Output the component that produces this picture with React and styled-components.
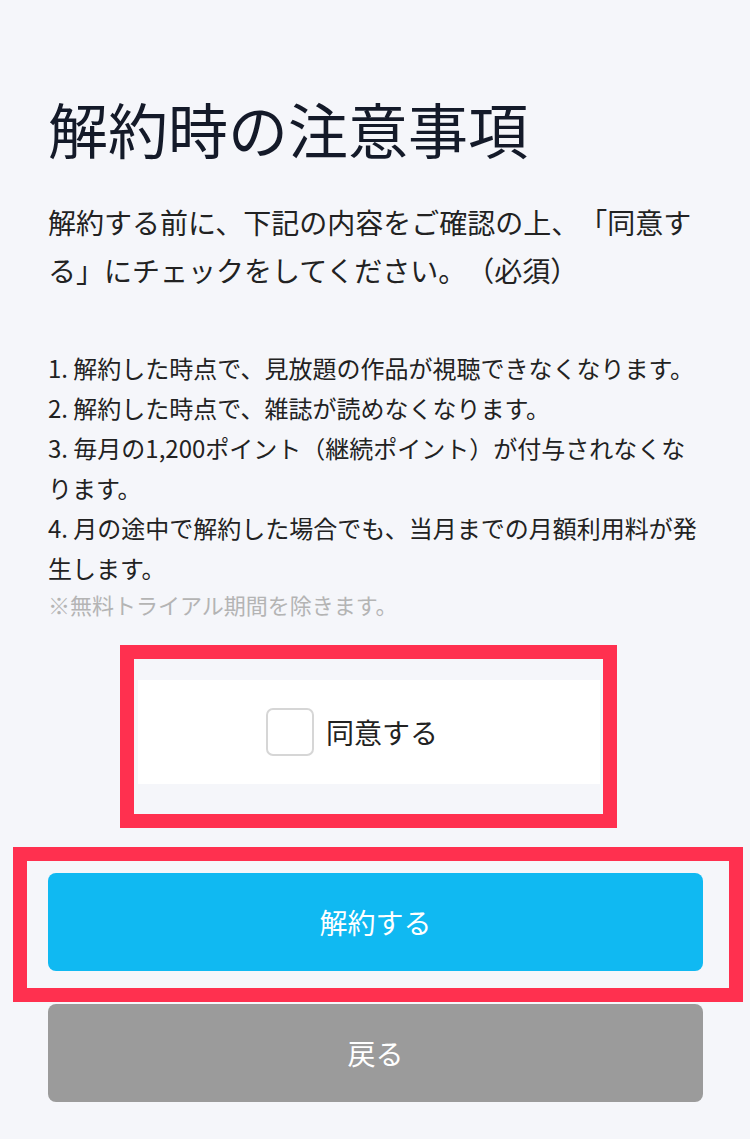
import React, { useState } from "react";
import styled, { createGlobalStyle } from "styled-components";

const GlobalStyle = createGlobalStyle`
  html, body {
    margin: 0;
    padding: 0;
    background: #f5f6fa;
  }
  body {
    font-family: "Noto Sans CJK JP", "Noto Sans", sans-serif;
    color: #222222;
    text-spacing-trim: space-all;
  }
`;

const notices = [
  "1. 解約した時点で、見放題の作品が視聴できなくなります。",
  "2. 解約した時点で、雑誌が読めなくなります。",
  "3. 毎月の1,200ポイント（継続ポイント）が付与されなくなります。",
  "4. 月の途中で解約した場合でも、当月までの月額利用料が発生します。",
];

export default function App() {
  const [agreed, setAgreed] = useState(false);

  return (
    <Page>
      <GlobalStyle />
      <Title>解約時の注意事項</Title>
      <Intro>解約する前に、下記の内容をご確認の上、「同意する」にチェックをしてください。（必須）</Intro>
      <NoticeList>
        {notices.map((n) => (
          <li key={n}>{n}</li>
        ))}
      </NoticeList>
      <Note>※無料トライアル期間を除きます。</Note>

      <AgreeFrame>
        <AgreePanel>
          <AgreeLabel onClick={() => setAgreed(!agreed)}>
            <CheckBox $checked={agreed} />
            <span>同意する</span>
          </AgreeLabel>
        </AgreePanel>
      </AgreeFrame>

      <ButtonFrame>
        <Button $variant="primary">解約する</Button>
      </ButtonFrame>
      <Button $variant="back">戻る</Button>
    </Page>
  );
}

const Page = styled.div`
  width: 750px;
  min-height: 1139px;
  box-sizing: border-box;
  padding: 86px 48px 40px;
  display: flex;
  flex-direction: column;
  align-items: flex-start;
`;

const Title = styled.h1`
  margin: 0;
  font-size: 60px;
  font-weight: 400;
  line-height: 84px;
  color: #141a29;
  letter-spacing: 0;
`;

const Intro = styled.p`
  margin: 28px 0 0;
  font-size: 28px;
  line-height: 48px;
  color: #222222;
`;

const NoticeList = styled.ul`
  list-style: none;
  margin: 54px 0 0;
  padding: 0;
  font-size: 24px;
  line-height: 40px;
  color: #222222;
`;

const Note = styled.p`
  margin: 0;
  font-size: 22px;
  line-height: 32px;
  color: #b4b4b4;
`;

const AgreeFrame = styled.div`
  margin: 25px 0 0 72px;
  width: 497px;
  box-sizing: border-box;
  border: 14px solid #ff304f;
  padding: 21px 3px 30px 4px;
`;

const AgreePanel = styled.div`
  height: 104px;
  background: #ffffff;
  display: flex;
  align-items: center;
  justify-content: center;
  padding-right: 34px;
`;

const AgreeLabel = styled.label`
  display: flex;
  align-items: center;
  gap: 12px;
  font-size: 28px;
  color: #222222;
  cursor: pointer;
`;

const CheckBox = styled.span`
  width: 48px;
  height: 48px;
  box-sizing: border-box;
  border: 2px solid #d6d6d6;
  border-radius: 7px;
  background: ${(p) => (p.$checked ? "#10b9f2" : "#ffffff")};
`;

const ButtonFrame = styled.div`
  margin: 19px 0 0 -35px;
  width: 730px;
  box-sizing: border-box;
  border: 14px solid #ff304f;
  padding: 12px 26px 17px 21px;
`;

const Button = styled.button`
  width: 655px;
  height: 98px;
  border: none;
  border-radius: 8px;
  font-family: inherit;
  font-size: 28px;
  color: #ffffff;
  background: ${(p) => (p.$variant === "primary" ? "#10b9f2" : "#9b9b9b")};
  margin-top: ${(p) => (p.$variant === "primary" ? "0" : "2px")};
  cursor: pointer;
`;
